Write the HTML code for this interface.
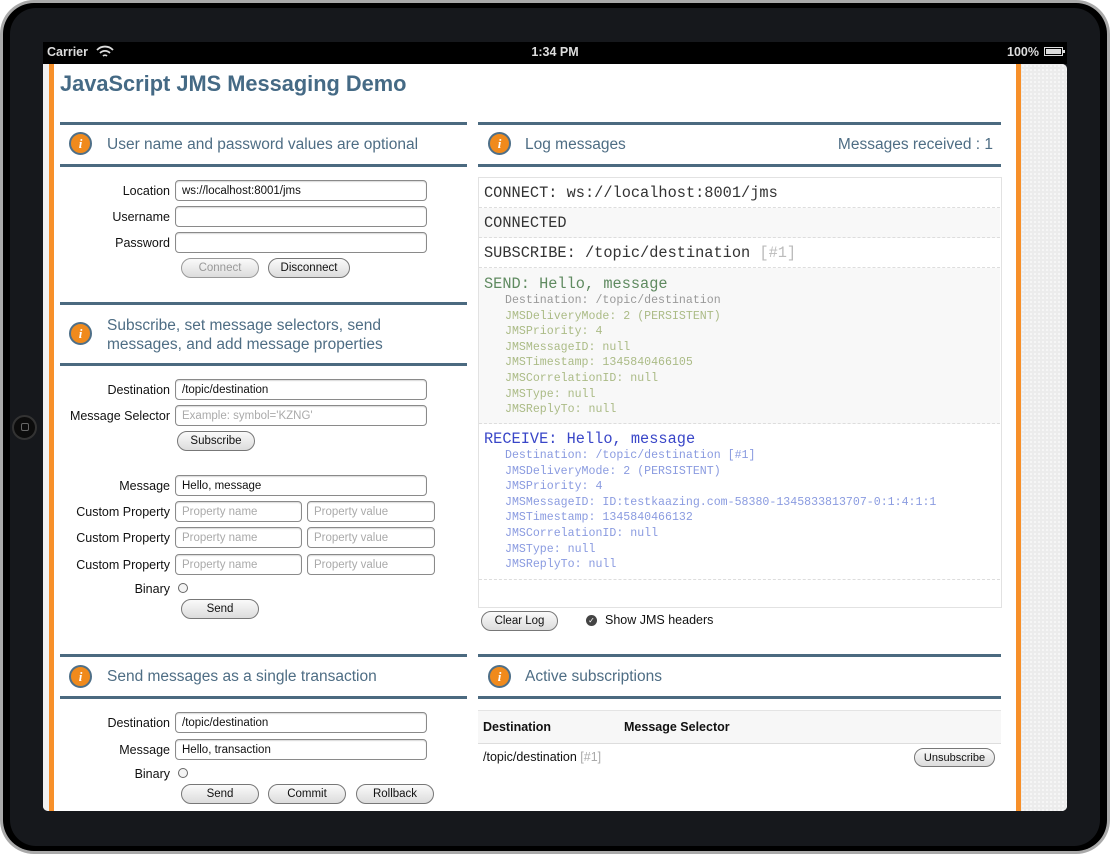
<!DOCTYPE html>
<html><head><meta charset="utf-8"><style>
*{margin:0;padding:0;box-sizing:border-box}
body{width:1110px;height:854px;background:#fff;position:relative;overflow:hidden;font-family:"Liberation Sans",sans-serif}
.a{position:absolute}
.lbl{position:absolute;font-size:12.5px;color:#111;text-align:right;width:170px;left:0}
.inp{position:absolute;height:21px;border:1px solid #8a8a8a;border-radius:4px;background:#fff;font-size:11.5px;padding:4px 0 0 6px;color:#111;box-shadow:inset 0 1px 1px rgba(0,0,0,.15)}
.ph{color:#aaa}
.btn{position:absolute;height:20px;border:1px solid #777;border-radius:10px;background:linear-gradient(#fafafa,#dcdcdc);font-size:11.5px;text-align:center;line-height:19px;color:#111}
.hl{position:absolute;height:3px;background:#4b6a80}
.ht{position:absolute;font-size:15.5px;color:#4e6d84}
.ic{position:absolute;width:23px;height:23px;border-radius:50%;background:#f08a1c;border:2px solid #4e6f88;color:#fff;font:italic bold 13px "Liberation Serif",serif;text-align:center;line-height:19px}
.rad{position:absolute;width:10px;height:10px;border:1px solid #666;border-radius:50%;background:#f4f4f4}
.m{font-family:"Liberation Mono",monospace}
.row{position:absolute;left:479px;width:521px;border-bottom:1px dashed #ddd;padding-left:5px}
.d{font-size:11.6px;line-height:15.6px;padding-left:21px}
</style></head><body>
<div class="a" style="left:0;top:0;width:1110px;height:854px;border-radius:34px;background:#a9a9a9"></div>
<div class="a" style="left:3px;top:3px;width:1104px;height:848px;border-radius:31px;background:#000"></div>
<div class="a" style="left:10px;top:8px;width:1090px;height:838px;border-radius:26px;background:#16181c"></div>
<div class="a" style="left:43px;top:42px;width:1024px;height:22px;background:#000"></div>
<div class="a" style="left:12px;top:415px;width:25px;height:25px;border-radius:50%;border:2px solid #333;background:#0c0c0c"></div>
<div class="a" style="left:21px;top:423px;width:8px;height:8px;border:1px solid #666;border-radius:2px"></div>
<div class="a" style="left:47px;top:45px;color:#ddd;font-size:12.5px;font-weight:bold">Carrier</div>
<svg class="a" style="left:96px;top:45px" width="18" height="13" viewBox="0 0 18 13"><path d="M1 5a11 11 0 0 1 16 0M4 8a7 7 0 0 1 10 0M7 11a3 3 0 0 1 4 0" stroke="#ddd" stroke-width="1.8" fill="none"/></svg>
<div class="a" style="left:0;width:1110px;top:45px;text-align:center;color:#ddd;font-size:12.5px;font-weight:bold">1:34 PM</div>
<div class="a" style="left:1007px;top:45px;color:#ddd;font-size:12.5px;font-weight:bold">100%</div>
<div class="a" style="left:1044px;top:47px;width:19px;height:9px;border:1px solid #ddd;background:#ddd;box-shadow:inset 0 0 0 1px #000"></div>
<div class="a" style="left:1063px;top:50px;width:2px;height:3px;background:#ddd"></div>
<div class="a" style="left:43px;top:64px;width:1024px;height:747px;background:#fff;border-radius:0 5px 5px 5px;overflow:hidden">
 <div class="a" style="left:0;top:0;width:6px;height:747px;background:#f0f0f0"></div>
 <div class="a" style="left:6px;top:0;width:5px;height:747px;background:#f7902a"></div>
 <div class="a" style="left:973px;top:0;width:5px;height:747px;background:#f7902a"></div>
 <div class="a" style="left:978px;top:0;width:46px;height:747px;background:#ececec;background-image:radial-gradient(#fafafa 1px,transparent 1px);background-size:4px 4px"></div>
</div>
<div class="a" style="left:60px;top:71px;font-size:21.8px;font-weight:bold;color:#456a85">JavaScript JMS Messaging Demo</div>

<div class="hl" style="left:60px;top:122px;width:407px"></div>
<div class="ic" style="left:69px;top:132px">i</div>
<div class="ht" style="left:107px;top:136px">User name and password values are optional</div>
<div class="hl" style="left:60px;top:164px;width:407px"></div>
<div class="lbl" style="top:184px">Location</div><div class="inp" style="left:175px;top:180px;width:252px">ws://localhost:8001/jms</div>
<div class="lbl" style="top:210px">Username</div><div class="inp" style="left:175px;top:206px;width:252px"></div>
<div class="lbl" style="top:236px">Password</div><div class="inp" style="left:175px;top:232px;width:252px"></div>
<div class="btn" style="left:181px;top:258px;width:78px;color:#999;border-color:#999">Connect</div>
<div class="btn" style="left:268px;top:258px;width:82px">Disconnect</div>

<div class="hl" style="left:60px;top:302px;width:407px"></div>
<div class="ic" style="left:69px;top:322px">i</div>
<div class="ht" style="left:107px;top:316px;line-height:19px">Subscribe, set message selectors, send<br>messages, and add message properties</div>
<div class="hl" style="left:60px;top:363px;width:407px"></div>
<div class="lbl" style="top:383px">Destination</div><div class="inp" style="left:175px;top:379px;width:252px">/topic/destination</div>
<div class="lbl" style="top:409px">Message Selector</div><div class="inp ph" style="left:175px;top:405px;width:252px">Example: symbol='KZNG'</div>
<div class="btn" style="left:177px;top:431px;width:78px">Subscribe</div>
<div class="lbl" style="top:479px">Message</div><div class="inp" style="left:175px;top:475px;width:252px">Hello, message</div>
<div class="lbl" style="top:505px">Custom Property</div><div class="inp ph" style="left:175px;top:501px;width:127px">Property name</div><div class="inp ph" style="left:307px;top:501px;width:128px">Property value</div>
<div class="lbl" style="top:531px">Custom Property</div><div class="inp ph" style="left:175px;top:527px;width:127px">Property name</div><div class="inp ph" style="left:307px;top:527px;width:128px">Property value</div>
<div class="lbl" style="top:558px">Custom Property</div><div class="inp ph" style="left:175px;top:554px;width:127px">Property name</div><div class="inp ph" style="left:307px;top:554px;width:128px">Property value</div>
<div class="lbl" style="top:582px">Binary</div><div class="rad" style="left:178px;top:583px"></div>
<div class="btn" style="left:181px;top:599px;width:78px">Send</div>

<div class="hl" style="left:60px;top:654px;width:407px"></div>
<div class="ic" style="left:69px;top:665px">i</div>
<div class="ht" style="left:107px;top:668px">Send messages as a single transaction</div>
<div class="hl" style="left:60px;top:696px;width:407px"></div>
<div class="lbl" style="top:716px">Destination</div><div class="inp" style="left:175px;top:712px;width:252px">/topic/destination</div>
<div class="lbl" style="top:743px">Message</div><div class="inp" style="left:175px;top:739px;width:252px">Hello, transaction</div>
<div class="lbl" style="top:767px">Binary</div><div class="rad" style="left:178px;top:768px"></div>
<div class="btn" style="left:181px;top:784px;width:78px">Send</div>
<div class="btn" style="left:268px;top:784px;width:78px">Commit</div>
<div class="btn" style="left:356px;top:784px;width:78px">Rollback</div>

<div class="hl" style="left:478px;top:122px;width:523px"></div>
<div class="ic" style="left:488px;top:132px">i</div>
<div class="ht" style="left:525px;top:136px">Log messages</div>
<div class="ht" style="left:700px;width:293px;text-align:right;top:136px">Messages received : 1</div>
<div class="hl" style="left:478px;top:164px;width:523px"></div>
<div class="a" style="left:478px;top:177px;width:524px;height:431px;border:1px solid #e2e2e2;background:#fff"></div>
<div class="row m" style="top:178px;height:30px;font-size:15.3px;line-height:31px;color:#333">CONNECT: ws://localhost:8001/jms</div>
<div class="row m" style="top:208px;height:30px;font-size:15.3px;line-height:31px;color:#333;background:#f8f8f8">CONNECTED</div>
<div class="row m" style="top:238px;height:30px;font-size:15.3px;line-height:31px;color:#333">SUBSCRIBE: /topic/destination <span style="color:#bbb">[#1]</span></div>
<div class="row m" style="top:268px;height:156px;background:#f8f8f8;padding-top:8px">
 <div style="font-size:15.3px;color:#5f8a60;line-height:17px">SEND: Hello, message</div>
 <div class="d" style="color:#999">Destination: /topic/destination</div>
 <div class="d" style="color:#abbb86">JMSDeliveryMode: 2 (PERSISTENT)<br>JMSPriority: 4<br>JMSMessageID: null<br>JMSTimestamp: 1345840466105<br>JMSCorrelationID: null<br>JMSType: null<br>JMSReplyTo: null</div>
</div>
<div class="row m" style="top:424px;height:156px;padding-top:7px">
 <div style="font-size:15.3px;color:#3946c8;line-height:17px">RECEIVE: Hello, message</div>
 <div class="d" style="color:#8a9be0">Destination: /topic/destination [#1]<br>JMSDeliveryMode: 2 (PERSISTENT)<br>JMSPriority: 4<br>JMSMessageID: ID:testkaazing.com-58380-1345833813707-0:1:4:1:1<br>JMSTimestamp: 1345840466132<br>JMSCorrelationID: null<br>JMSType: null<br>JMSReplyTo: null</div>
</div>
<div class="btn" style="left:481px;top:611px;width:77px">Clear Log</div>
<div class="a" style="left:586px;top:615px;width:11px;height:11px;border-radius:50%;background:#444;color:#fff;font-size:8px;text-align:center;line-height:11px">✓</div>
<div class="a" style="left:605px;top:613px;font-size:12.5px;color:#111">Show JMS headers</div>

<div class="hl" style="left:478px;top:654px;width:523px"></div>
<div class="ic" style="left:488px;top:665px">i</div>
<div class="ht" style="left:525px;top:668px">Active subscriptions</div>
<div class="hl" style="left:478px;top:696px;width:523px"></div>
<div class="a" style="left:478px;top:710px;width:523px;height:34px;background:#f7f7f7;border-top:1px solid #e4e4e4;border-bottom:1px solid #ddd"></div>
<div class="a" style="left:483px;top:720px;font-size:12.5px;font-weight:bold;color:#111">Destination</div>
<div class="a" style="left:624px;top:720px;font-size:12.5px;font-weight:bold;color:#111">Message Selector</div>
<div class="a" style="left:483px;top:750px;font-size:12.5px;color:#111">/topic/destination <span style="color:#aaa">[#1]</span></div>
<div class="btn" style="left:914px;top:748px;width:81px;height:19px;font-size:11px;line-height:18px">Unsubscribe</div>
</body></html>
